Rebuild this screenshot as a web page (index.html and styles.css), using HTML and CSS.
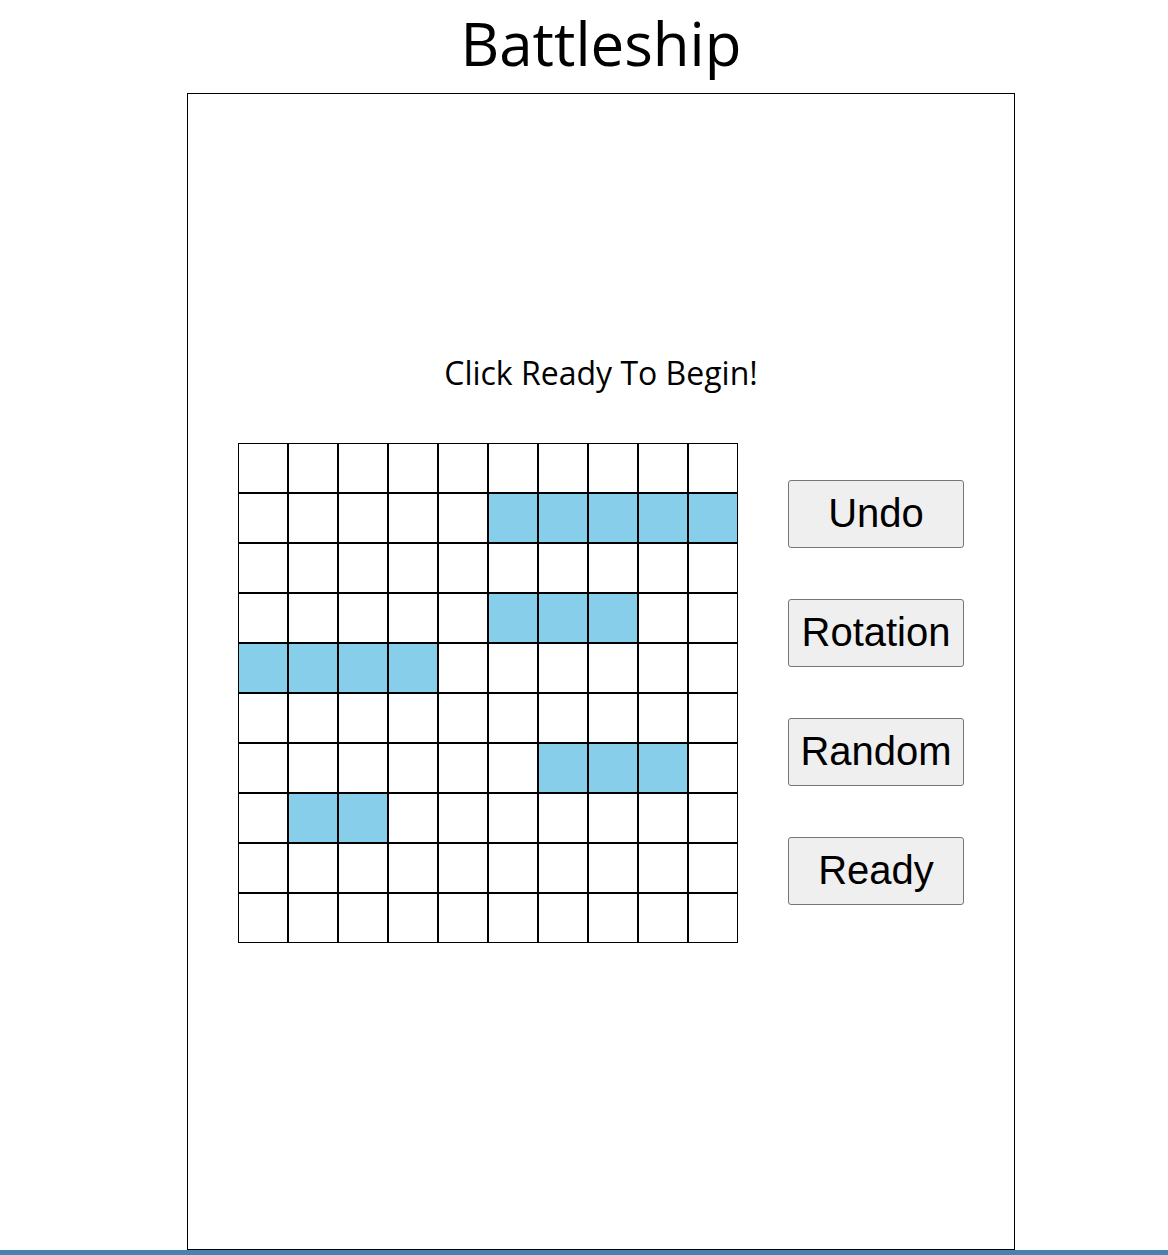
FILE: index.html
```html
<!DOCTYPE html>
<html lang="en">
<head>
<meta charset="utf-8">
<title>Battleship</title>
<link rel="stylesheet" href="styles.css">
</head>
<body>
<div class="page">
  <h1 class="title">Battleship</h1>
  <div class="board">
    <p class="message">Click Ready To Begin!</p>
    <div class="play">
      <div class="grid">
        <div class="cell"></div><div class="cell"></div><div class="cell"></div><div class="cell"></div><div class="cell"></div><div class="cell"></div><div class="cell"></div><div class="cell"></div><div class="cell"></div><div class="cell"></div>
        <div class="cell"></div><div class="cell"></div><div class="cell"></div><div class="cell"></div><div class="cell"></div><div class="cell ship"></div><div class="cell ship"></div><div class="cell ship"></div><div class="cell ship"></div><div class="cell ship"></div>
        <div class="cell"></div><div class="cell"></div><div class="cell"></div><div class="cell"></div><div class="cell"></div><div class="cell"></div><div class="cell"></div><div class="cell"></div><div class="cell"></div><div class="cell"></div>
        <div class="cell"></div><div class="cell"></div><div class="cell"></div><div class="cell"></div><div class="cell"></div><div class="cell ship"></div><div class="cell ship"></div><div class="cell ship"></div><div class="cell"></div><div class="cell"></div>
        <div class="cell ship"></div><div class="cell ship"></div><div class="cell ship"></div><div class="cell ship"></div><div class="cell"></div><div class="cell"></div><div class="cell"></div><div class="cell"></div><div class="cell"></div><div class="cell"></div>
        <div class="cell"></div><div class="cell"></div><div class="cell"></div><div class="cell"></div><div class="cell"></div><div class="cell"></div><div class="cell"></div><div class="cell"></div><div class="cell"></div><div class="cell"></div>
        <div class="cell"></div><div class="cell"></div><div class="cell"></div><div class="cell"></div><div class="cell"></div><div class="cell"></div><div class="cell ship"></div><div class="cell ship"></div><div class="cell ship"></div><div class="cell"></div>
        <div class="cell"></div><div class="cell ship"></div><div class="cell ship"></div><div class="cell"></div><div class="cell"></div><div class="cell"></div><div class="cell"></div><div class="cell"></div><div class="cell"></div><div class="cell"></div>
        <div class="cell"></div><div class="cell"></div><div class="cell"></div><div class="cell"></div><div class="cell"></div><div class="cell"></div><div class="cell"></div><div class="cell"></div><div class="cell"></div><div class="cell"></div>
        <div class="cell"></div><div class="cell"></div><div class="cell"></div><div class="cell"></div><div class="cell"></div><div class="cell"></div><div class="cell"></div><div class="cell"></div><div class="cell"></div><div class="cell"></div>
      </div>
      <div class="controls">
        <button class="btn" type="button">Undo</button>
        <button class="btn" type="button">Rotation</button>
        <button class="btn" type="button">Random</button>
        <button class="btn" type="button">Ready</button>
      </div>
    </div>
  </div>
</div>
<div class="footer-bar"></div>
</body>
</html>
```

FILE: styles.css
```css
html, body {
  margin: 0;
  padding: 0;
  background: #ffffff;
  overflow: hidden;
}

body {
  font-family: "Open Sans", "Noto Sans", sans-serif;
  color: #000;
}

.page {
  width: 828px;
  margin-left: 187px;
}

.title {
  margin: 0;
  height: 93px;
  font-size: 60px;
  font-weight: 400;
  line-height: 87px;
  text-align: center;
}

.board {
  box-sizing: border-box;
  height: 1157px;
  border: 1px solid #000;
  padding: 257px 50px 0;
  display: flex;
  flex-direction: column;
  align-items: stretch;
}

.message {
  margin: 0 0 49px;
  font-size: 32px;
  font-weight: 400;
  text-align: center;
}

.play {
  display: flex;
  align-items: center;
  gap: 50px;
}

.grid {
  display: grid;
  grid-template-columns: repeat(10, 50px);
  grid-auto-rows: 50px;
}

.cell {
  box-sizing: border-box;
  border: 1px solid #000;
  background: #fff;
}

.cell.ship {
  background: #87ceeb;
}

.controls {
  display: flex;
  flex-direction: column;
  gap: 51px;
  margin-bottom: 2px;
}

.btn {
  box-sizing: border-box;
  width: 176px;
  height: 68px;
  padding: 0;
  font-family: "Liberation Sans", Arial, sans-serif;
  font-size: 40px;
  color: #000;
  background: #efefef;
  border: 1px solid #767676;
  border-radius: 3px;
}

.footer-bar {
  height: 5px;
  background: #4682b4;
}
```
